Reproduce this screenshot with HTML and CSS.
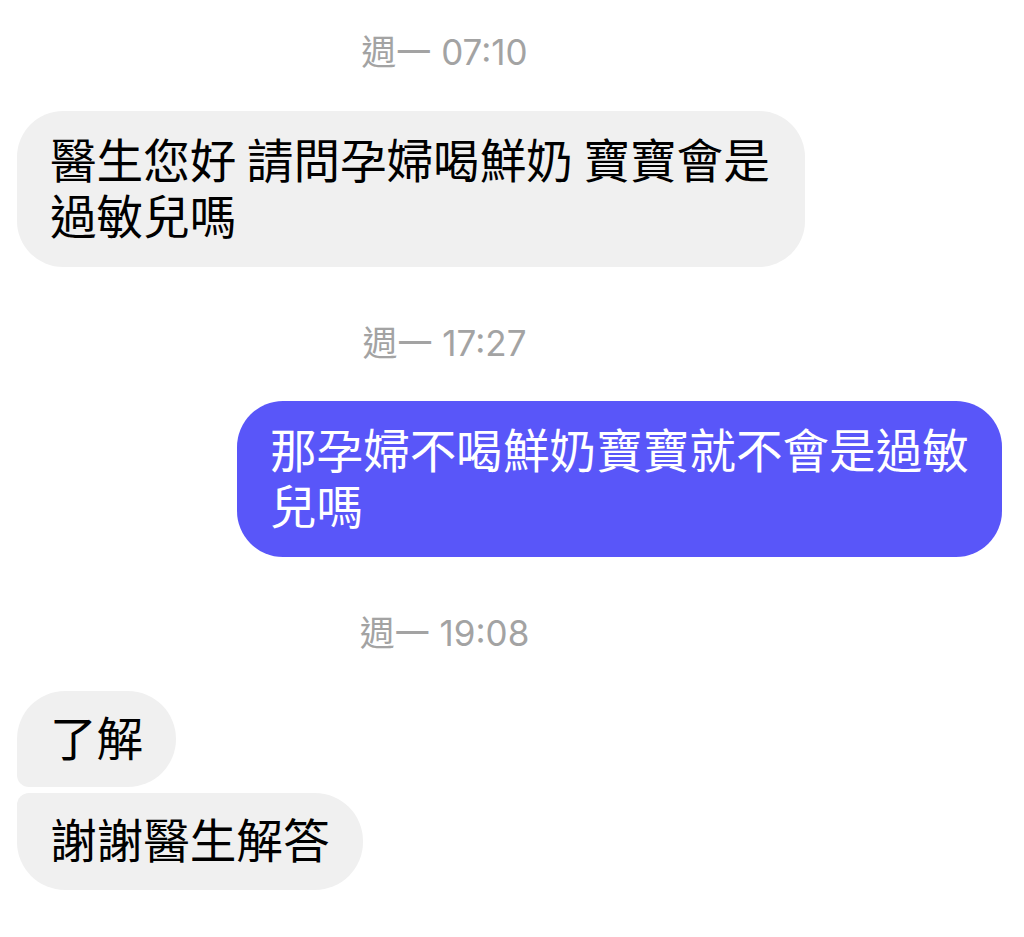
FILE: index.html
```html
<!DOCTYPE html>
<html lang="zh-Hant">
<head>
<meta charset="utf-8">
<title>Chat</title>
<link rel="stylesheet" href="styles.css">
</head>
<body>
<main class="chat">
  <div class="time">週一 07:10</div>
  <div class="row in">
    <div class="bubble bubble-in bubble-wide">醫生您好 請問孕婦喝鮮奶 寶寶會是過敏兒嗎</div>
  </div>

  <div class="time">週一 17:27</div>
  <div class="row out">
    <div class="bubble bubble-out">那孕婦不喝鮮奶寶寶就不會是過敏兒嗎</div>
  </div>

  <div class="time">週一 19:08</div>
  <div class="group">
    <div class="row in">
      <div class="bubble bubble-in small first">了解</div>
    </div>
    <div class="row in">
      <div class="bubble bubble-in small last">謝謝醫生解答</div>
    </div>
  </div>
</main>
</body>
</html>
```

FILE: styles.css
```css
* { box-sizing: border-box; }

html, body {
  margin: 0;
  padding: 0;
  background: #ffffff;
}

body {
  width: 1024px;
  height: 937px;
  overflow: hidden;
  font-family: "Noto Sans CJK TC", "Noto Sans", sans-serif;
}

.chat {
  display: flex;
  flex-direction: column;
  padding: 32px 22px 0 17px;
}

.time {
  font-family: "Inter", "Noto Sans CJK TC", sans-serif;
  font-size: 35px;
  line-height: 40px;
  height: 40px;
  color: #a3a3a3;
  text-align: center;
  padding-right: 130px;
  margin-bottom: 39px;
}

.chat > .time:not(:first-child) { margin-top: 56px; margin-bottom: 38px; }

.row {
  display: flex;
}

.row.in { justify-content: flex-start; }
.row.out { justify-content: flex-end; }

.bubble {
  font-size: 46.6px;
  line-height: 56px;
  padding: 19px 33px 25px;
  border-radius: 46px;
  color: #000;
  word-break: break-all;
}

.bubble-in {
  background: #f0f0f0;
}

.bubble-wide { max-width: 788px; }

.bubble-out {
  background: #5956f9;
  color: #ffffff;
  max-width: 765px;
}

.group {
  display: flex;
  flex-direction: column;
  gap: 6px;
}

.small {
  padding: 17px 33px 23px;
  border-radius: 48px;
}

.small.first { border-bottom-left-radius: 12px; }
.small.last { border-top-left-radius: 12px; height: 97px; }
```
